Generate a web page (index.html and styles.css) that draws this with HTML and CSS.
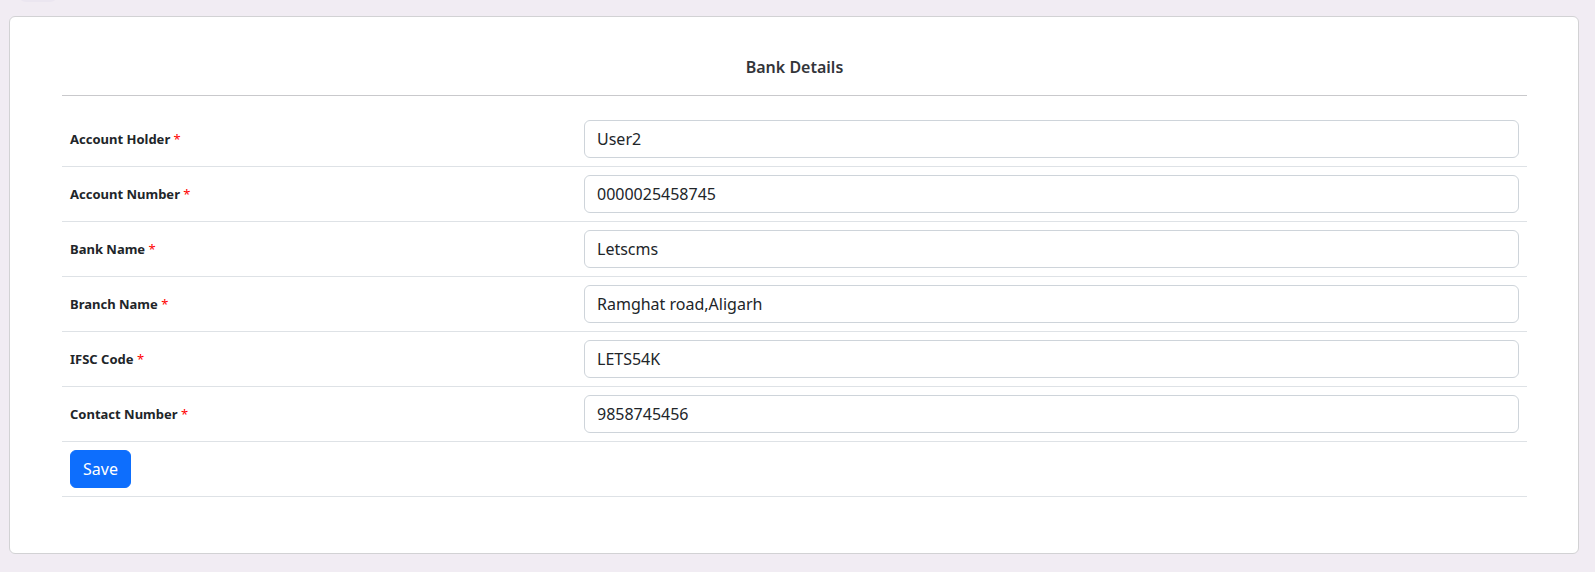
FILE: index.html
```html
<!DOCTYPE html>
<html lang="en">
<head>
<meta charset="utf-8">
<title>Bank Details</title>
<link rel="stylesheet" href="styles.css">
</head>
<body>
<div class="top-tab"></div>
<div class="card">
  <h5 class="card-title">Bank Details</h5>
  <hr class="divider">
  <form class="bank-form">
    <table class="form-table">
      <tbody>
        <tr>
          <th class="label-cell"><label>Account Holder <span class="req">*</span></label></th>
          <td class="input-cell"><input class="form-control" type="text" value="User2"></td>
        </tr>
        <tr>
          <th class="label-cell"><label>Account Number <span class="req">*</span></label></th>
          <td class="input-cell"><input class="form-control" type="text" value="0000025458745"></td>
        </tr>
        <tr>
          <th class="label-cell"><label>Bank Name <span class="req">*</span></label></th>
          <td class="input-cell"><input class="form-control" type="text" value="Letscms"></td>
        </tr>
        <tr>
          <th class="label-cell"><label>Branch Name <span class="req">*</span></label></th>
          <td class="input-cell"><input class="form-control" type="text" value="Ramghat road,Aligarh"></td>
        </tr>
        <tr>
          <th class="label-cell"><label>IFSC Code <span class="req">*</span></label></th>
          <td class="input-cell"><input class="form-control" type="text" value="LETS54K"></td>
        </tr>
        <tr>
          <th class="label-cell"><label>Contact Number <span class="req">*</span></label></th>
          <td class="input-cell"><input class="form-control" type="text" value="9858745456"></td>
        </tr>
        <tr>
          <td class="button-cell" colspan="2"><button class="btn-primary" type="button">Save</button></td>
        </tr>
      </tbody>
    </table>
  </form>
</div>
</body>
</html>
```
FILE: styles.css
```css
* { box-sizing: border-box; }
html, body { margin: 0; }
body {
  background: #f1ecf3;
  font-family: "Noto Sans", "Open Sans", sans-serif;
  color: #212529;
  padding: 16px 16px 19px 9px;
  position: relative;
  width: 1595px;
  height: 572px;
}
.top-tab {
  position: absolute;
  left: 18px;
  top: -6px;
  width: 40px;
  height: 8px;
  border-radius: 0 0 10px 10px;
  background: #ebe6f0;
}
.card {
  width: 1570px;
  height: 538px;
  background: #fff;
  border: 1px solid #d2d2d4;
  border-radius: 6px;
  padding: 38px 51px 0 52px;
}
.card-title {
  margin: 0;
  text-align: center;
  font-size: 16px;
  line-height: 24px;
  font-weight: 600;
  color: #33353a;
}
.divider {
  margin: 16px 0 16px;
  border: 0;
  border-top: 1px solid #c9c9cc;
  height: 0;
}
.bank-form { margin: 0; }
.form-table {
  width: 100%;
  border-collapse: collapse;
}
.form-table tr { border-bottom: 1px solid #dee2e6; }
.label-cell {
  width: 514px;
  padding: 8px;
  text-align: left;
  vertical-align: middle;
  font-size: 13px;
  font-weight: 700;
  color: #212529;
}
.req { color: #f00; font-weight: 400; }
.input-cell { padding: 8px; vertical-align: middle; }
.button-cell { padding: 8px; }
.form-control {
  display: block;
  width: 100%;
  height: 38px;
  padding: 6px 12px;
  font: inherit;
  font-size: 16px;
  line-height: 24px;
  color: #212529;
  background: #fff;
  border: 1px solid #ced4da;
  border-radius: 6px;
}
.btn-primary {
  display: block;
  height: 38px;
  padding: 6px 12px;
  font-family: inherit;
  font-size: 16px;
  font-weight: 400;
  line-height: 24px;
  color: #fff;
  background: #0d6efd;
  border: 1px solid #0d6efd;
  border-radius: 6px;
}
```
